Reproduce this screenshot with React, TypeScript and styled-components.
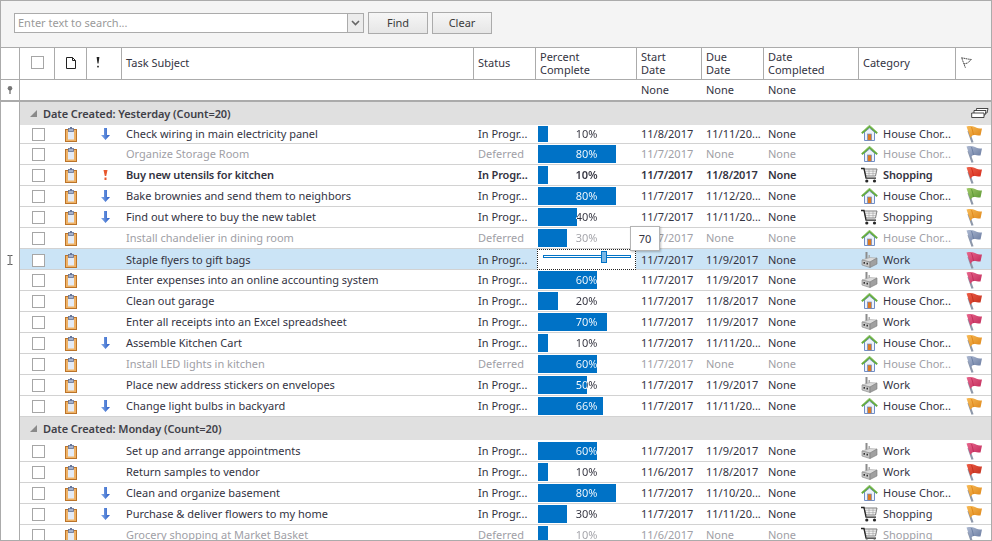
import React from "react";
import styled, { createGlobalStyle } from "styled-components";

const GlobalStyle = createGlobalStyle`
  html, body { margin: 0; padding: 0; background: #fff; }
  * { box-sizing: border-box; }
`;

const COLUMNS = "35px 32px 35px 352px 62px 101px 65px 62px 95px 97px 35px";
const LINE = "#ababab";
const ROW_LINE = "#d2d2d2";

const Stage = styled.div`
  position: relative;
  width: 992px;
  height: 541px;
  overflow: hidden;
  font-family: "Noto Sans", "Open Sans", sans-serif;
  font-size: 11px;
  color: #33333f;
`;

const Shell = styled.div`
  width: 992px;
  height: 541px;
  overflow: hidden;
  border: 1px solid ${LINE};
  background: #fff;
`;

const Toolbar = styled.div`
  height: 47px;
  display: flex;
  align-items: center;
  gap: 4px;
  padding: 0 0 3px 13px;
  background: #f4f4f4;
  border-bottom: 1px solid ${LINE};
`;

const SearchBox = styled.div`
  width: 350px;
  height: 20px;
  display: flex;
  background: #fff;
  border: 1px solid ${LINE};
`;

const SearchText = styled.div`
  flex: 1;
  padding-left: 3px;
  line-height: 18px;
  color: #9a9a9a;
`;

const SearchArrow = styled.div`
  width: 16px;
  display: flex;
  align-items: center;
  justify-content: center;
  background: #ececec;
  border-left: 1px solid ${LINE};
`;

const ToolButton = styled.div`
  width: 60px;
  height: 22px;
  display: flex;
  align-items: center;
  justify-content: center;
  background: linear-gradient(#f6f6f6, #e6e6e6);
  border: 1px solid ${LINE};
  color: #3a3a3a;
`;

const Line = styled.div`
  display: flex;
`;

const HeaderLine = styled(Line)`
  height: 32px;
  border-bottom: 1px solid ${LINE};
`;

const FilterLine = styled(Line)`
  height: 22px;
  border-bottom: 2px solid ${LINE};
`;

const Indicator = styled.div`
  width: 19px;
  flex: none;
  display: flex;
  align-items: center;
  justify-content: center;
  padding-right: 1px;
  border-right: 1px solid ${LINE};
`;

const HeaderGrid = styled.div`
  display: grid;
  grid-template-columns: ${COLUMNS};
  flex: 1;
`;

const HeaderCell = styled.div`
  display: flex;
  align-items: center;
  padding: 0 0 2px 4px;
  border-right: 1px solid ${LINE};
  line-height: 13px;
  &:last-child { border-right: none; }
`;

const HeaderIconCell = styled(HeaderCell)<{ $inset: number }>`
  padding-left: ${(p) => p.$inset}px;
`;

const FilterCell = styled.div`
  padding-left: 4px;
  line-height: 20px;
`;

const GroupLine = styled(Line)<{ $gap?: boolean }>`
  height: ${(p) => (p.$gap ? 24 : 23)}px;
`;

const GroupBand = styled.div`
  flex: 1;
  height: 23px;
  display: flex;
  align-items: center;
  gap: 6px;
  padding-left: 10px;
  background: #e0e0e0;
  font-weight: 600;
  letter-spacing: -0.08px;
  color: #404048;
  position: relative;
`;

const GroupCards = styled.span`
  position: absolute;
  right: 2px;
  top: 5px;
  display: flex;
`;

const TaskLine = styled(Line)<{ $first?: boolean }>`
  height: ${(p) => (p.$first ? 19 : 21)}px;
`;

const TaskGrid = styled.div<{ $selected?: boolean; $muted?: boolean; $bold?: boolean }>`
  --ink: ${(p) => (p.$muted ? "#a0a0a6" : "#33333f")};
  flex: 1;
  display: grid;
  grid-template-columns: ${COLUMNS};
  border-bottom: 1px solid ${ROW_LINE};
  background: ${(p) => (p.$selected ? "#cbe4f6" : "#fff")};
  color: var(--ink);
  font-weight: ${(p) => (p.$bold ? 600 : 400)};
  letter-spacing: ${(p) => (p.$bold ? "-0.14px" : "0")};
`;

const Cell = styled.div<{ $first?: boolean }>`
  display: flex;
  align-items: center;
  padding: 0 0 ${(p) => (p.$first ? 2 : 1)}px 4px;
  white-space: nowrap;
  overflow: hidden;
  line-height: 15px;
`;

const IconCell = styled.div`
  display: flex;
  align-items: center;
  justify-content: center;
`;

const CheckCell = styled(IconCell)`
  padding-left: 1px;
`;

const Check = styled.span`
  width: 13px;
  height: 13px;
  background: #fff;
  border: 1px solid #a6a6a6;
`;

const ClipCell = styled(IconCell)`
  padding-right: 1px;
`;

const ArrowCell = styled(IconCell)`
  padding-left: 2px;
`;

const CategoryCell = styled(Cell)`
  padding-left: 2px;
  gap: 5px;
`;

const FlagCell = styled(IconCell)`
  padding-left: 1px;
`;

const PercentCell = styled.div`
  padding: 1px 2px;
  min-width: 0;
`;

const PercentTrack = styled.div`
  position: relative;
  height: 100%;
`;

const PercentFill = styled.div`
  position: absolute;
  left: 0;
  top: 0;
  bottom: 0;
  background: #0072c6;
`;

const PercentLabel = styled.div<{ $first?: boolean }>`
  position: relative;
  text-align: center;
  line-height: ${(p) => (p.$first ? 15 : 18)}px;
  color: transparent;
  -webkit-background-clip: text;
  background-clip: text;
`;

const SliderFocus = styled.div`
  position: relative;
  height: 21px;
  margin: -1px -1px 0;
  background: #fff;
  border: 1px dotted #222;
`;

const SliderTrack = styled.div`
  position: absolute;
  left: 5px;
  right: 4px;
  top: 5px;
  height: 3px;
  background: #fff;
  border: 1px solid #0072c6;
`;

const SliderThumb = styled.div`
  position: absolute;
  left: 63px;
  top: 1px;
  width: 6px;
  height: 12px;
  background: #7ab6e4;
  border: 1px solid #0072c6;
`;

const Tooltip = styled.div`
  position: absolute;
  left: 630px;
  top: 226px;
  width: 30px;
  height: 25px;
  display: flex;
  align-items: center;
  justify-content: center;
  background: #fff;
  border: 1px solid #b4b4b4;
  box-shadow: 1px 1px 2px rgba(0, 0, 0, 0.25);
  z-index: 5;
`;

type FlagColor = "orange" | "slate" | "red" | "green" | "pink" | "scarlet";
const FLAG: Record<FlagColor, [string, string]> = {
  orange: ["#f8bc58", "#dd8416"],
  slate: ["#aebad2", "#66789e"],
  red: ["#f06850", "#d22616"],
  scarlet: ["#ee5e46", "#c02c1c"],
  green: ["#a4cc6c", "#589430"],
  pink: ["#e8688e", "#c02858"],
};

const FlagIcon = ({ c }: { c: FlagColor }) => (
  <svg width="16" height="17" viewBox="0 0 16 17">
    <defs>
      <linearGradient id={`flag-${c}`} x1="0" y1="0" x2="1" y2="1">
        <stop offset="0" stopColor={FLAG[c][0]} />
        <stop offset="1" stopColor={FLAG[c][1]} />
      </linearGradient>
    </defs>
    <path d="M2.5 5 L6.5 16.5" stroke="#8e98aa" strokeWidth="2.2" />
    <path
      d="M0.5 0.5 C3 -0.5 6 0 9 1 C11 2 13.5 2.5 16 2.5 L14.5 9.5 C12.5 9.8 10 9 8 9 C6.5 9 5.5 10 4.5 12 Z"
      fill={`url(#flag-${c})`}
    />
    <path d="M5.5 1 C6.5 3.5 7 6.5 7.5 9" fill="none" stroke={FLAG[c][1]} strokeWidth="0.8" />
  </svg>
);

const ClipIcon = () => (
  <svg width="12" height="15" viewBox="0 0 12 15">
    <rect x="0.5" y="2.5" width="11" height="12" fill="#efb266" stroke="#bb742a" />
    <rect x="3" y="4.5" width="6" height="8" fill="#e4ebf6" />
    <rect x="3.5" y="1.5" width="5" height="3" fill="#a6b2cc" stroke="#67769a" strokeWidth="0.8" />
    <rect x="5" y="0" width="2" height="2" fill="#67769a" />
  </svg>
);

const ArrowIcon = () => (
  <svg width="9" height="12" viewBox="0 0 9 12">
    <defs>
      <linearGradient id="arrow-blue" x1="0" y1="0" x2="1" y2="0">
        <stop offset="0" stopColor="#88aeea" />
        <stop offset="1" stopColor="#2458c4" />
      </linearGradient>
    </defs>
    <path d="M3 0 H6 V7 H9 L4.5 12 L0 7 H3 Z" fill="url(#arrow-blue)" />
  </svg>
);

const BangIcon = () => (
  <svg width="5" height="10" viewBox="0 0 5 10">
    <path d="M0.5 0 H4.5 L3.2 6 H1.8 Z" fill="#e8582e" />
    <rect x="1.5" y="7.5" width="2" height="2.5" fill="#e8582e" />
  </svg>
);

const HouseIcon = () => (
  <svg width="17" height="16" viewBox="0 0 17 16">
    <path d="M3.5 7 L8.5 3 L13.5 7 V15.5 H3.5 Z" fill="#eef2fa" stroke="#6f8ec8" />
    <path d="M0.8 8.2 L8.5 1.2 L16.2 8.2" fill="none" stroke="#62aa3c" strokeWidth="1.9" />
    <path d="M2.5 5.5 L8.5 0.3 L14.5 5.5" fill="none" stroke="#b4dc98" strokeWidth="0.7" />
    <rect x="6.5" y="9" width="4" height="6.5" fill="#dd7a22" stroke="#6f8ec8" strokeWidth="0.7" />
  </svg>
);

const CartIcon = () => (
  <svg width="17" height="16" viewBox="0 0 17 16">
    <path d="M3 2 H16 L14.5 9 H5 Z" fill="#f4f4f4" stroke="#707070" strokeWidth="0.9" />
    <path d="M4 4.2 H15.5 M4.5 6.6 H15 M8 2 V9 M12 2 V9" stroke="#a0a0a0" strokeWidth="0.6" />
    <path d="M0 1.5 H3 L5 11.2 H15" fill="none" stroke="#262626" strokeWidth="1.3" />
    <circle cx="5.8" cy="14" r="1.6" fill="#262626" />
    <circle cx="13.5" cy="14" r="1.6" fill="#262626" />
  </svg>
);

const FactoryIcon = () => (
  <svg width="17" height="16" viewBox="0 0 17 16">
    <rect x="4.5" y="0" width="2" height="7" fill="#8c8c8c" />
    <rect x="7.5" y="3" width="1.4" height="4" fill="#a8a8a8" />
    <path d="M1 8 L9 5.5 L16 6 L9 10 Z" fill="#dcdcdc" stroke="#9a9a9a" strokeWidth="0.5" />
    <path d="M1 8 L9 10 V15.5 L1 13 Z" fill="#c8c8c8" stroke="#808080" strokeWidth="0.6" />
    <path d="M9 10 L16 6 V12 L9 15.5 Z" fill="#a0a0a0" stroke="#787878" strokeWidth="0.6" />
    <path d="M2.5 10 h1.5 v1.7 h-1.5 Z M5.5 10.8 h1.5 v1.7 h-1.5 Z" fill="#333" />
  </svg>
);

const DocIcon = () => (
  <svg width="10" height="12" viewBox="0 0 10 12">
    <path d="M0.5 0.5 H6.5 L9.5 3.5 V11.5 H0.5 Z M6.5 0.5 V3.5 H9.5" fill="#fff" stroke="#222" />
  </svg>
);

const HeaderBang = () => (
  <svg width="4" height="11" viewBox="0 0 4 11">
    <path d="M0.6 0 H3.4 L2.5 6.5 H1.5 Z" fill="#222" />
    <rect x="1.2" y="8.8" width="1.6" height="1.6" fill="#222" />
  </svg>
);

const HeaderFlag = () => (
  <svg width="11" height="12" viewBox="0 0 11 12">
    <path
      d="M0.5 0.5 L4.5 11 M1 1 C3 1 5 2 10.5 2.5 L6.5 6 L3 7"
      fill="none"
      stroke="#333"
      strokeWidth="0.9"
      strokeDasharray="1.4 0.5"
    />
  </svg>
);

const PinIcon = () => (
  <svg width="6" height="8" viewBox="0 0 6 8">
    <circle cx="3" cy="2.3" r="2.3" fill="#777" />
    <rect x="2.4" y="3" width="1.2" height="5" fill="#666" />
  </svg>
);

const BeamIcon = () => (
  <svg width="6" height="10" viewBox="0 0 6 10">
    <path
      d="M0.5 0.5 H2.5 L3 1 L3.5 0.5 H5.5 M3 1 V9 M0.5 9.5 H2.5 L3 9 L3.5 9.5 H5.5"
      fill="none"
      stroke="#444"
      strokeWidth="0.9"
    />
  </svg>
);

const CollapseIcon = () => (
  <svg width="7" height="7" viewBox="0 0 7 7">
    <path d="M7 0 V7 H0 Z" fill="#8a8a8a" />
  </svg>
);

const CardsIcon = () => (
  <svg width="18" height="12" viewBox="0 0 18 12">
    <path d="M5.5 1.5 H17 L16 6 H5 Z" fill="#fff" stroke="#333" strokeWidth="0.9" />
    <path d="M3 3.5 H15 L14 8 H3 Z" fill="#fff" stroke="#333" strokeWidth="0.9" />
    <path d="M0.7 6 H13 V10.5 H0.7 Z" fill="#fff" stroke="#333" strokeWidth="0.9" />
  </svg>
);

const DropChevron = () => (
  <svg width="9" height="6" viewBox="0 0 9 6">
    <path d="M1 1 L4.5 4.5 L8 1" fill="none" stroke="#666" strokeWidth="1.6" />
  </svg>
);

type Cat = "house" | "shop" | "work";
const CATS: Record<Cat, { label: string; icon: React.ReactNode }> = {
  house: { label: "House Chor...", icon: <HouseIcon /> },
  shop: { label: "Shopping", icon: <CartIcon /> },
  work: { label: "Work", icon: <FactoryIcon /> },
};

interface Task {
  s: string;
  st?: string;
  p: number;
  start: string;
  due: string;
  cat: Cat;
  flag: FlagColor;
  pr?: "low" | "high";
  muted?: boolean;
  bold?: boolean;
  slider?: boolean;
}

const IP = "In Progr...";
const DEF = "Deferred";

const group1: Task[] = [
  { s: "Check wiring in main electricity panel", p: 10, start: "11/8/2017", due: "11/11/20...", cat: "house", flag: "orange", pr: "low" },
  { s: "Organize Storage Room", st: DEF, p: 80, start: "11/7/2017", due: "None", cat: "house", flag: "slate", muted: true },
  { s: "Buy new utensils for kitchen", p: 10, start: "11/7/2017", due: "11/8/2017", cat: "shop", flag: "red", pr: "high", bold: true },
  { s: "Bake brownies and send them to neighbors", p: 80, start: "11/7/2017", due: "11/12/20...", cat: "house", flag: "green", pr: "low" },
  { s: "Find out where to buy the new tablet", p: 40, start: "11/7/2017", due: "11/11/20...", cat: "shop", flag: "orange", pr: "low" },
  { s: "Install chandelier in dining room", st: DEF, p: 30, start: "11/7/2017", due: "None", cat: "house", flag: "slate", muted: true },
  { s: "Staple flyers to gift bags", p: 70, start: "11/7/2017", due: "11/9/2017", cat: "work", flag: "pink", slider: true },
  { s: "Enter expenses into an online accounting system", p: 60, start: "11/7/2017", due: "11/9/2017", cat: "work", flag: "pink" },
  { s: "Clean out garage", p: 20, start: "11/7/2017", due: "11/8/2017", cat: "house", flag: "scarlet" },
  { s: "Enter all receipts into an Excel spreadsheet", p: 70, start: "11/7/2017", due: "11/9/2017", cat: "work", flag: "pink" },
  { s: "Assemble Kitchen Cart", p: 10, start: "11/7/2017", due: "11/11/20...", cat: "house", flag: "orange", pr: "low" },
  { s: "Install LED lights in kitchen", st: DEF, p: 60, start: "11/7/2017", due: "None", cat: "house", flag: "slate", muted: true },
  { s: "Place new address stickers on envelopes", p: 50, start: "11/7/2017", due: "11/9/2017", cat: "work", flag: "pink" },
  { s: "Change light bulbs in backyard", p: 66, start: "11/7/2017", due: "11/11/20...", cat: "house", flag: "orange", pr: "low" },
];

const group2: Task[] = [
  { s: "Set up and arrange appointments", p: 60, start: "11/7/2017", due: "11/9/2017", cat: "work", flag: "pink" },
  { s: "Return samples to vendor", p: 10, start: "11/6/2017", due: "11/8/2017", cat: "work", flag: "scarlet" },
  { s: "Clean and organize basement", p: 80, start: "11/7/2017", due: "11/10/20...", cat: "house", flag: "orange", pr: "low" },
  { s: "Purchase & deliver flowers to my home", p: 30, start: "11/7/2017", due: "11/11/20...", cat: "shop", flag: "orange", pr: "low" },
  { s: "Grocery shopping at Market Basket", st: DEF, p: 10, start: "11/6/2017", due: "None", cat: "shop", flag: "slate", muted: true },
];

const Percent = ({ value, slider, first }: { value: number; slider?: boolean; first?: boolean }) => {
  if (slider) {
    return (
      <PercentCell>
        <SliderFocus>
          <SliderTrack />
          <SliderThumb />
        </SliderFocus>
      </PercentCell>
    );
  }
  const fill = Math.round(value * 0.98);
  return (
    <PercentCell>
      <PercentTrack>
        <PercentFill style={{ width: fill }} />
        <PercentLabel
          $first={first}
          style={{ backgroundImage: `linear-gradient(90deg, #fff ${fill}px, var(--ink) ${fill}px)` }}
        >
          {value}%
        </PercentLabel>
      </PercentTrack>
    </PercentCell>
  );
};

const TaskRow = ({ t, first }: { t: Task; first?: boolean }) => (
  <TaskLine $first={first}>
    <Indicator>{t.slider && <BeamIcon />}</Indicator>
    <TaskGrid $selected={t.slider} $muted={t.muted} $bold={t.bold}>
      <CheckCell>
        <Check />
      </CheckCell>
      <ClipCell>
        <ClipIcon />
      </ClipCell>
      <ArrowCell>
        {t.pr === "low" && <ArrowIcon />}
        {t.pr === "high" && <BangIcon />}
      </ArrowCell>
      <Cell $first={first}>{t.s}</Cell>
      <Cell $first={first}>{t.st ?? IP}</Cell>
      <Percent value={t.p} slider={t.slider} first={first} />
      <Cell $first={first}>{t.start}</Cell>
      <Cell $first={first}>{t.due}</Cell>
      <Cell $first={first}>None</Cell>
      <CategoryCell $first={first}>
        {CATS[t.cat].icon}
        <span>{CATS[t.cat].label}</span>
      </CategoryCell>
      <FlagCell>
        <FlagIcon c={t.flag} />
      </FlagCell>
    </TaskGrid>
  </TaskLine>
);

const GroupRow = ({ label, cards, gap }: { label: string; cards?: boolean; gap?: boolean }) => (
  <GroupLine $gap={gap}>
    <Indicator />
    <GroupBand>
      <CollapseIcon />
      <span>{label}</span>
      {cards && (
        <GroupCards>
          <CardsIcon />
        </GroupCards>
      )}
    </GroupBand>
  </GroupLine>
);

export default function App() {
  return (
    <Stage>
      <GlobalStyle />
      <Shell>
        <Toolbar>
          <SearchBox>
            <SearchText>Enter text to search...</SearchText>
            <SearchArrow>
              <DropChevron />
            </SearchArrow>
          </SearchBox>
          <ToolButton>Find</ToolButton>
          <ToolButton>Clear</ToolButton>
        </Toolbar>
        <HeaderLine>
          <Indicator />
          <HeaderGrid>
            <HeaderIconCell $inset={11}>
              <Check />
            </HeaderIconCell>
            <HeaderIconCell $inset={11}>
              <DocIcon />
            </HeaderIconCell>
            <HeaderIconCell $inset={9}>
              <HeaderBang />
            </HeaderIconCell>
            <HeaderCell>Task Subject</HeaderCell>
            <HeaderCell>Status</HeaderCell>
            <HeaderCell>
              Percent
              <br />
              Complete
            </HeaderCell>
            <HeaderCell>
              Start
              <br />
              Date
            </HeaderCell>
            <HeaderCell>
              Due
              <br />
              Date
            </HeaderCell>
            <HeaderCell>
              Date
              <br />
              Completed
            </HeaderCell>
            <HeaderCell>Category</HeaderCell>
            <HeaderIconCell $inset={5}>
              <HeaderFlag />
            </HeaderIconCell>
          </HeaderGrid>
        </HeaderLine>
        <FilterLine>
          <Indicator>
            <PinIcon />
          </Indicator>
          <HeaderGrid>
            <FilterCell />
            <FilterCell />
            <FilterCell />
            <FilterCell />
            <FilterCell />
            <FilterCell />
            <FilterCell>None</FilterCell>
            <FilterCell>None</FilterCell>
            <FilterCell>None</FilterCell>
            <FilterCell />
            <FilterCell />
          </HeaderGrid>
        </FilterLine>
        <GroupRow label="Date Created: Yesterday (Count=20)" cards />
        {group1.map((t, i) => (
          <TaskRow key={t.s} t={t} first={i === 0} />
        ))}
        <GroupRow label="Date Created: Monday (Count=20)" gap />
        {group2.map((t) => (
          <TaskRow key={t.s} t={t} />
        ))}
      </Shell>
      <Tooltip>70</Tooltip>
    </Stage>
  );
}
